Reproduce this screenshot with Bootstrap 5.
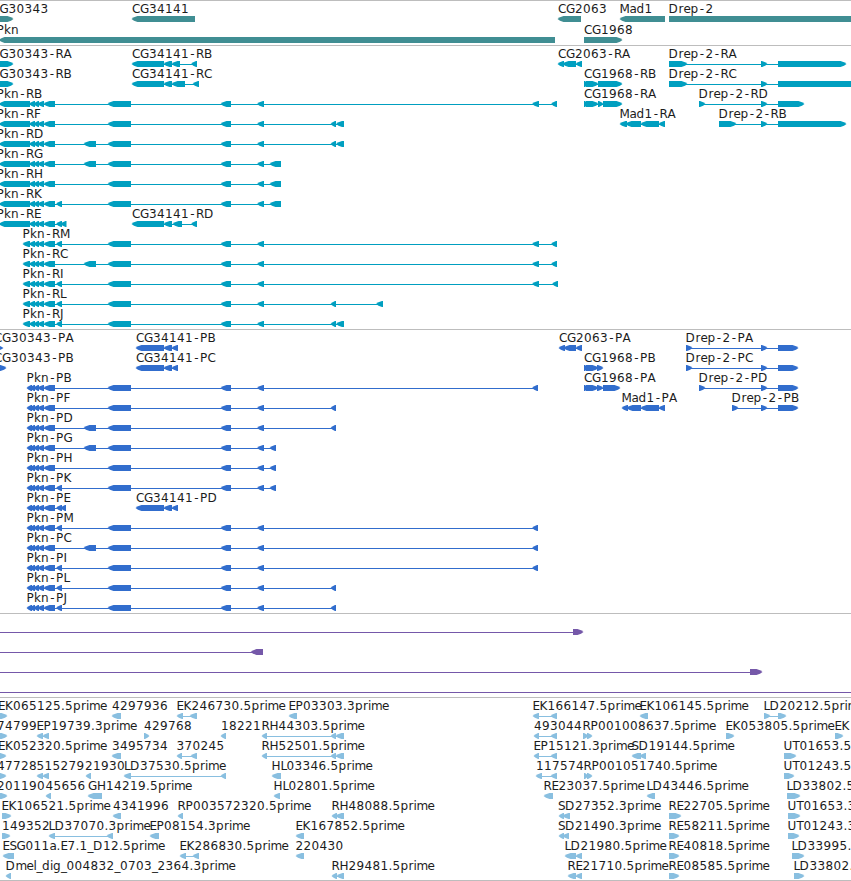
<!DOCTYPE html>
<html lang="en">
<head>
  <meta charset="UTF-8">
  <title>Genome Browser</title>
  <meta name="viewport" content="width=device-width, initial-scale=1">
  <link href="https://cdn.jsdelivr.net/npm/bootstrap@5.3.0/dist/css/bootstrap.min.css" rel="stylesheet">

  <style>
    body {
      font-family: "DejaVu Sans", sans-serif;
      font-size: 12px;
    }
    .browser {
      border-top: 1px solid #bdbdbd;
    }
    .track {
      border-bottom: 1px solid #bdbdbd;
      padding-bottom: 3px;
    }
    .track-tight {
      padding-bottom: 2px;
    }
    /* One line of features: label on top, glyphs below */
    .lane {
      width: 100%;
      height: 20px;
      overflow: visible;
    }
    .lane-tall .lane {
      height: 21px;
    }
    .lane text {
      fill: #1c1c1c;
    }
    .genes { color: #408e93; }
    .mrna { color: #009fc0; }
    .cds { color: #316dcd; }
    .span { color: #7558a9; }
    .est { color: #89bfe0; }
  </style>
</head>
<body class="bg-white overflow-hidden">

  <div class="browser d-flex flex-column">
    <div id="genes" class="track track-tight lane-tall genes d-flex flex-column"></div>
    <div id="mrna" class="track mrna d-flex flex-column"></div>
    <div id="cds" class="track cds d-flex flex-column"></div>
    <div id="span" class="track span d-flex flex-column"></div>
    <div id="est" class="track track-tight est d-flex flex-column"></div>
  </div>

  <script src="https://cdn.jsdelivr.net/npm/bootstrap@5.3.0/dist/js/bootstrap.bundle.min.js"></script>

  <script>
    // Letter advances in pixels, digits are 8
    const advance = {
      C: 8, G: 9, D: 10, E: 7, F: 7, H: 9, I: 4, J: 4, K: 8, L: 6, M: 10, P: 7.5, R: 8, S: 7, T: 7, U: 9,
      A: 8, B: 8, a: 7, d: 8, e: 7, g: 8, i: 3, k: 7, l: 3, m: 11, n: 8, p: 8, r: 5, ".": 4, "-": 7, "_": 5.5
    };

    // Feature: label, label x, direction, blocks [start, end]
    const f = (label, x, dir, ...blocks) => ({ label, x, dir, blocks });

    // Exons shared by the Pkn transcripts
    const tail = [[29.5, 35], [34, 39], [38, 44], [44, 55]];
    const rLong = [[-1, 30], ...tail];
    const rShort = [[23, 30], ...tail];
    const pStart = [[27, 32], [30, 35], [34, 39], [38, 44], [44, 55]];
    const e57 = [56.5, 62], e84 = [84, 96];
    const mid = [[108, 131], [221, 231], [257.5, 264]];
    const far = [[532.5, 539], [551.5, 557]];
    const near = [[331, 336], [336.5, 344]];
    const drepMid = [761, 767];

    const tracks = {
      genes: [
        [f("CG30343", -8.5, "R", [-10, 13]), f("CG34141", 132, "L", [132, 195]), f("CG2063", 558, "L", [558, 581]),
         f("Mad1", 619.5, "L", [620, 665]), f("Drep-2", 668.5, "R", [669, 870])],
        [f("Pkn", -3.5, "L", [-1, 555]), f("CG1968", 584, "R", [584, 622])]
      ],
      mrna: [
        [f("CG30343-RA", -8.5, "R", [-10, 13]), f("CG34141-RB", 132, "L", [132, 164], [164, 172], [172, 180], [191.5, 197]),
         f("CG2063-RA", 558, "L", [558, 564], [563, 576], [576, 582]), f("Drep-2-RA", 668.5, "R", [669, 687], drepMid, [778, 846])],
        [f("CG30343-RB", -8.5, "R", [-10, 13]), f("CG34141-RC", 132, "L", [132, 164], [164, 172], [172, 185], [193, 199]),
         f("CG1968-RB", 584, "R", [584, 588], [586, 598], [598, 622]), f("Drep-2-RC", 668.5, "R", [669, 687], drepMid, [778, 870])],
        [f("Pkn-RB", -3.5, "L", ...rLong, ...mid, ...far), f("CG1968-RA", 584, "R", [584, 588], [586, 598], [598, 603], [603, 622]),
         f("Drep-2-RD", 698.5, "R", [699, 705], drepMid, [778, 804])],
        [f("Pkn-RF", -3.5, "L", ...rLong, ...mid, ...near), f("Mad1-RA", 619.5, "L", [620, 627], [626, 641], [641, 659], [659, 665]),
         f("Drep-2-RB", 718.5, "R", [719, 736], drepMid, [778, 846])],
        [f("Pkn-RD", -3.5, "L", ...rLong, e84, ...mid, ...near)],
        [f("Pkn-RG", -3.5, "L", ...rLong, e84, ...mid, [270, 281])],
        [f("Pkn-RH", -3.5, "L", ...rLong, ...mid, [270, 281])],
        [f("Pkn-RK", -3.5, "L", ...rLong, e57, ...mid, [270, 281])],
        [f("Pkn-RE", -3.5, "L", ...rLong, e57, [61, 66.5]), f("CG34141-RD", 132, "L", [132, 164], [164, 172], [173, 182], [191.5, 197])],
        [f("Pkn-RM", 22.5, "L", ...rShort, e57, ...mid, ...far)],
        [f("Pkn-RC", 22.5, "L", ...rShort, e84, ...mid, ...far)],
        [f("Pkn-RI", 22.5, "L", ...rShort, e57, ...mid, [532.5, 539], [552.5, 558])],
        [f("Pkn-RL", 22.5, "L", ...rShort, e57, ...mid, [331, 336], [376.5, 383])],
        [f("Pkn-RJ", 22.5, "L", ...rShort, e57, ...mid, ...near)]
      ],
      cds: [
        [f("CG30343-PA", -6, "R", [-10, 3]), f("CG34141-PB", 136, "L", [136, 164], [164, 172], [172, 178]),
         f("CG2063-PA", 559, "L", [559, 565], [564, 576], [576, 582]), f("Drep-2-PA", 685.5, "R", [686, 692], drepMid, [778, 798])],
        [f("CG30343-PB", -6, "R", [-10, 6]), f("CG34141-PC", 136, "L", [136, 164], [164, 172], [172, 178]),
         f("CG1968-PB", 584, "R", [584, 588], [586, 598], [597, 603]), f("Drep-2-PC", 685.5, "R", [686, 692], drepMid, [778, 798])],
        [f("Pkn-PB", 26.5, "L", ...pStart, ...mid, [532.5, 538]), f("CG1968-PA", 584, "R", [584, 588], [586, 598], [597, 603], [603, 620]),
         f("Drep-2-PD", 698.5, "R", [699, 705], drepMid, [778, 798])],
        [f("Pkn-PF", 26.5, "L", ...pStart, ...mid, [331, 336]), f("Mad1-PA", 621.5, "L", [622, 628], [627, 641], [641, 659], [659, 665]),
         f("Drep-2-PB", 731.5, "R", [732, 738], drepMid, [778, 798])],
        [f("Pkn-PD", 26.5, "L", ...pStart, e84, ...mid, [331, 336])],
        [f("Pkn-PG", 26.5, "L", ...pStart, e84, ...mid, [270, 276])],
        [f("Pkn-PH", 26.5, "L", ...pStart, ...mid, [270, 276])],
        [f("Pkn-PK", 26.5, "L", ...pStart, e57, ...mid, [270, 276])],
        [f("Pkn-PE", 26.5, "L", ...pStart, e57, [61, 66]), f("CG34141-PD", 136, "L", [136, 164], [164, 172], [172, 178])],
        [f("Pkn-PM", 26.5, "L", ...pStart, e57, ...mid, [532.5, 538])],
        [f("Pkn-PC", 26.5, "L", ...pStart, e84, ...mid, [532.5, 538])],
        [f("Pkn-PI", 26.5, "L", ...pStart, e57, ...mid, [532.5, 538])],
        [f("Pkn-PL", 26.5, "L", ...pStart, e57, ...mid, [331, 336])],
        [f("Pkn-PJ", 26.5, "L", ...pStart, e57, ...mid, [331, 336])]
      ],
      span: [
        [f("", 0, "R", [-20, -10], [573, 583])],
        [f("", 0, "L", [-20, -10], [251, 263])],
        [f("", 0, "R", [-20, -10], [750, 762])],
        [f("", 0, "R", [-20, -10], [870, 880])]
      ],
      est: [
        [f("EK065125.5prime", -2, "R", [-3, 7]), f("4297936", 112, "L", [112, 121]), f("EK246730.5prime", 176.5, "L", [177, 183], [190, 197]),
         f("EP03303.3prime", 288.5, "L", [289, 297]), f("EK166147.5prime", 532.5, "L", [533, 539], [551, 557]),
         f("EK106145.5prime", 639.5, "L", [640, 648]), f("LD20212.5prime", 763.5, "R", [764, 770], [778, 786])],
        [f("74799", -3, "R", [-3, 7]), f("EP19739.3prime", 36.5, "L", [37, 43], [43, 49]), f("429768", 144, "R", [144, 149]),
         f("18221", 221, "L", [221, 226]), f("RH44303.5prime", 261.5, "L", [262, 267], [331, 336], [336, 344]),
         f("493044", 534, "L", [534, 539], [551, 557]), f("RP001008637.5prime", 582.5, "R", [583, 588], [587, 592]),
         f("EK053805.5prime", 725.5, "R", [726, 734]), f("EK", 834.5, "R", [835, 843])],
        [f("EK052320.5prime", -2, "R", [-3, 6]), f("3495734", 112, "L", [112, 121]), f("370245", 176.5, "L", [177, 182], [191, 197]),
         f("RH52501.5prime", 261.5, "L", [262, 267], [331, 336], [336, 344]), f("EP15121.3prime", 533.5, "L", [534, 539], [551, 557]),
         f("SD19144.5prime", 631.5, "L", [632, 641], [640, 646]), f("UT01653.5prime", 783.5, "R", [784, 796])],
        [f("47728", -3, "R", [-3, 6]), f("515279", 36.5, "L", [37, 43], [43, 49]), f("21930", 85, "L", [86, 91]),
         f("LD37530.5prime", 124, "L", [124, 131], [221, 226]), f("HL03346.5prime", 271.5, "L", [272, 281]),
         f("117574", 536, "L", [536, 542], [551, 557]), f("RP001051740.5prime", 583.5, "R", [584, 588], [587, 592]),
         f("UT01243.5prime", 783.5, "R", [784, 794])],
        [f("201190", -3, "R", [-3, 7]), f("45656", 45.5, "L", [46, 51]), f("GH14219.5prime", 88, "L", [88, 102]),
         f("HL02801.5prime", 273.5, "L", [274, 280]), f("RE23037.5prime", 543.5, "L", [544, 553]),
         f("LD43446.5prime", 646.5, "L", [647, 655]), f("LD33802.5prime", 786.5, "R", [787, 800])],
        [f("EK106521.5prime", 1.5, "R", [2, 11]), f("4341996", 113, "L", [113, 121]), f("RP003572320.5prime", 177.5, "L", [178, 183]),
         f("RH48088.5prime", 331.5, "L", [332, 337], [336, 344]), f("SD27352.3prime", 558, "L", [559, 564], [563, 570]),
         f("RE22705.5prime", 668.5, "R", [669, 681]), f("UT01653.3prime", 787.5, "R", [788, 800])],
        [f("149352", 2, "R", [2, 10]), f("LD37070.3prime", 48.5, "L", [49, 55], [107, 113]), f("EP08154.3prime", 149.5, "L", [150, 159]),
         f("EK167852.5prime", 295.5, "L", [296, 304]), f("SD21490.3prime", 558, "L", [559, 564], [563, 569]),
         f("RE58211.5prime", 668.5, "R", [669, 679]), f("UT01243.3prime", 787.5, "R", [788, 799])],
        [f("ESG011a.E7.1_D12.5prime", 2.5, "L", [3, 14]), f("EK286830.5prime", 179.5, "L", [180, 186], [193, 199]),
         f("220430", 295.5, "L", [296, 304]), f("LD21980.5prime", 564.5, "L", [565, 576], [576, 582]),
         f("RE40818.5prime", 668.5, "R", [669, 679]), f("LD33995.5prime", 791.5, "R", [792, 804])],
        [f("Dmel_dig_004832_0703_2364.3prime", 5.5, "L", [6, 11]), f("RH29481.5prime", 331.5, "L", [332, 337], [337, 344]),
         f("RE21710.5prime", 567.5, "L", [568, 576], [576, 582]), f("RE08585.5prime", 668.5, "R", [669, 679]),
         f("LD33802.3prime", 793.5, "R", [794, 804])]
      ]
    };

    // Block with a slightly rounded arrow head at its downstream end
    function block(a, b, dir) {
      const s = dir === "L" ? 1 : -1;
      const tip = dir === "L" ? a - 0.5 : b + 0.5;
      const base = dir === "L" ? b : a;
      const head = tip + s * Math.min(6, b - a - 0.5);
      const bend = tip + s * 2;
      return `<path d="M${tip} 18Q${bend} 16.2 ${head} 15H${base}V21H${head}Q${bend} 19.8 ${tip} 18Z" fill="currentColor"/>`;
    }

    function label(text, x) {
      if (!text) return "";
      const xs = [];
      for (const c of text) {
        // centre the narrow hyphen in its slot
        xs.push(c === "-" ? x + 1.3 : x);
        x += advance[c] || 8;
      }
      return `<text x="${xs.join(" ")}" y="12">${text}</text>`;
    }

    for (const id in tracks) {
      document.getElementById(id).innerHTML = tracks[id].map(lane => {
        const glyphs = lane.map(({ blocks, dir }) => {
          const start = blocks[0][0] + 1;
          const end = blocks[blocks.length - 1][1] - 1;
          const line = `<rect x="${start}" y="18" width="${end - start}" height="1" fill="currentColor"/>`;
          return line + blocks.map(([a, b]) => block(a, b, dir)).join("");
        }).join("");
        const labels = lane.map(o => label(o.label, o.x)).join("");
        return `<svg class="lane d-block flex-shrink-0">${glyphs}${labels}</svg>`;
      }).join("");
    }
  </script>
</body>
</html>
